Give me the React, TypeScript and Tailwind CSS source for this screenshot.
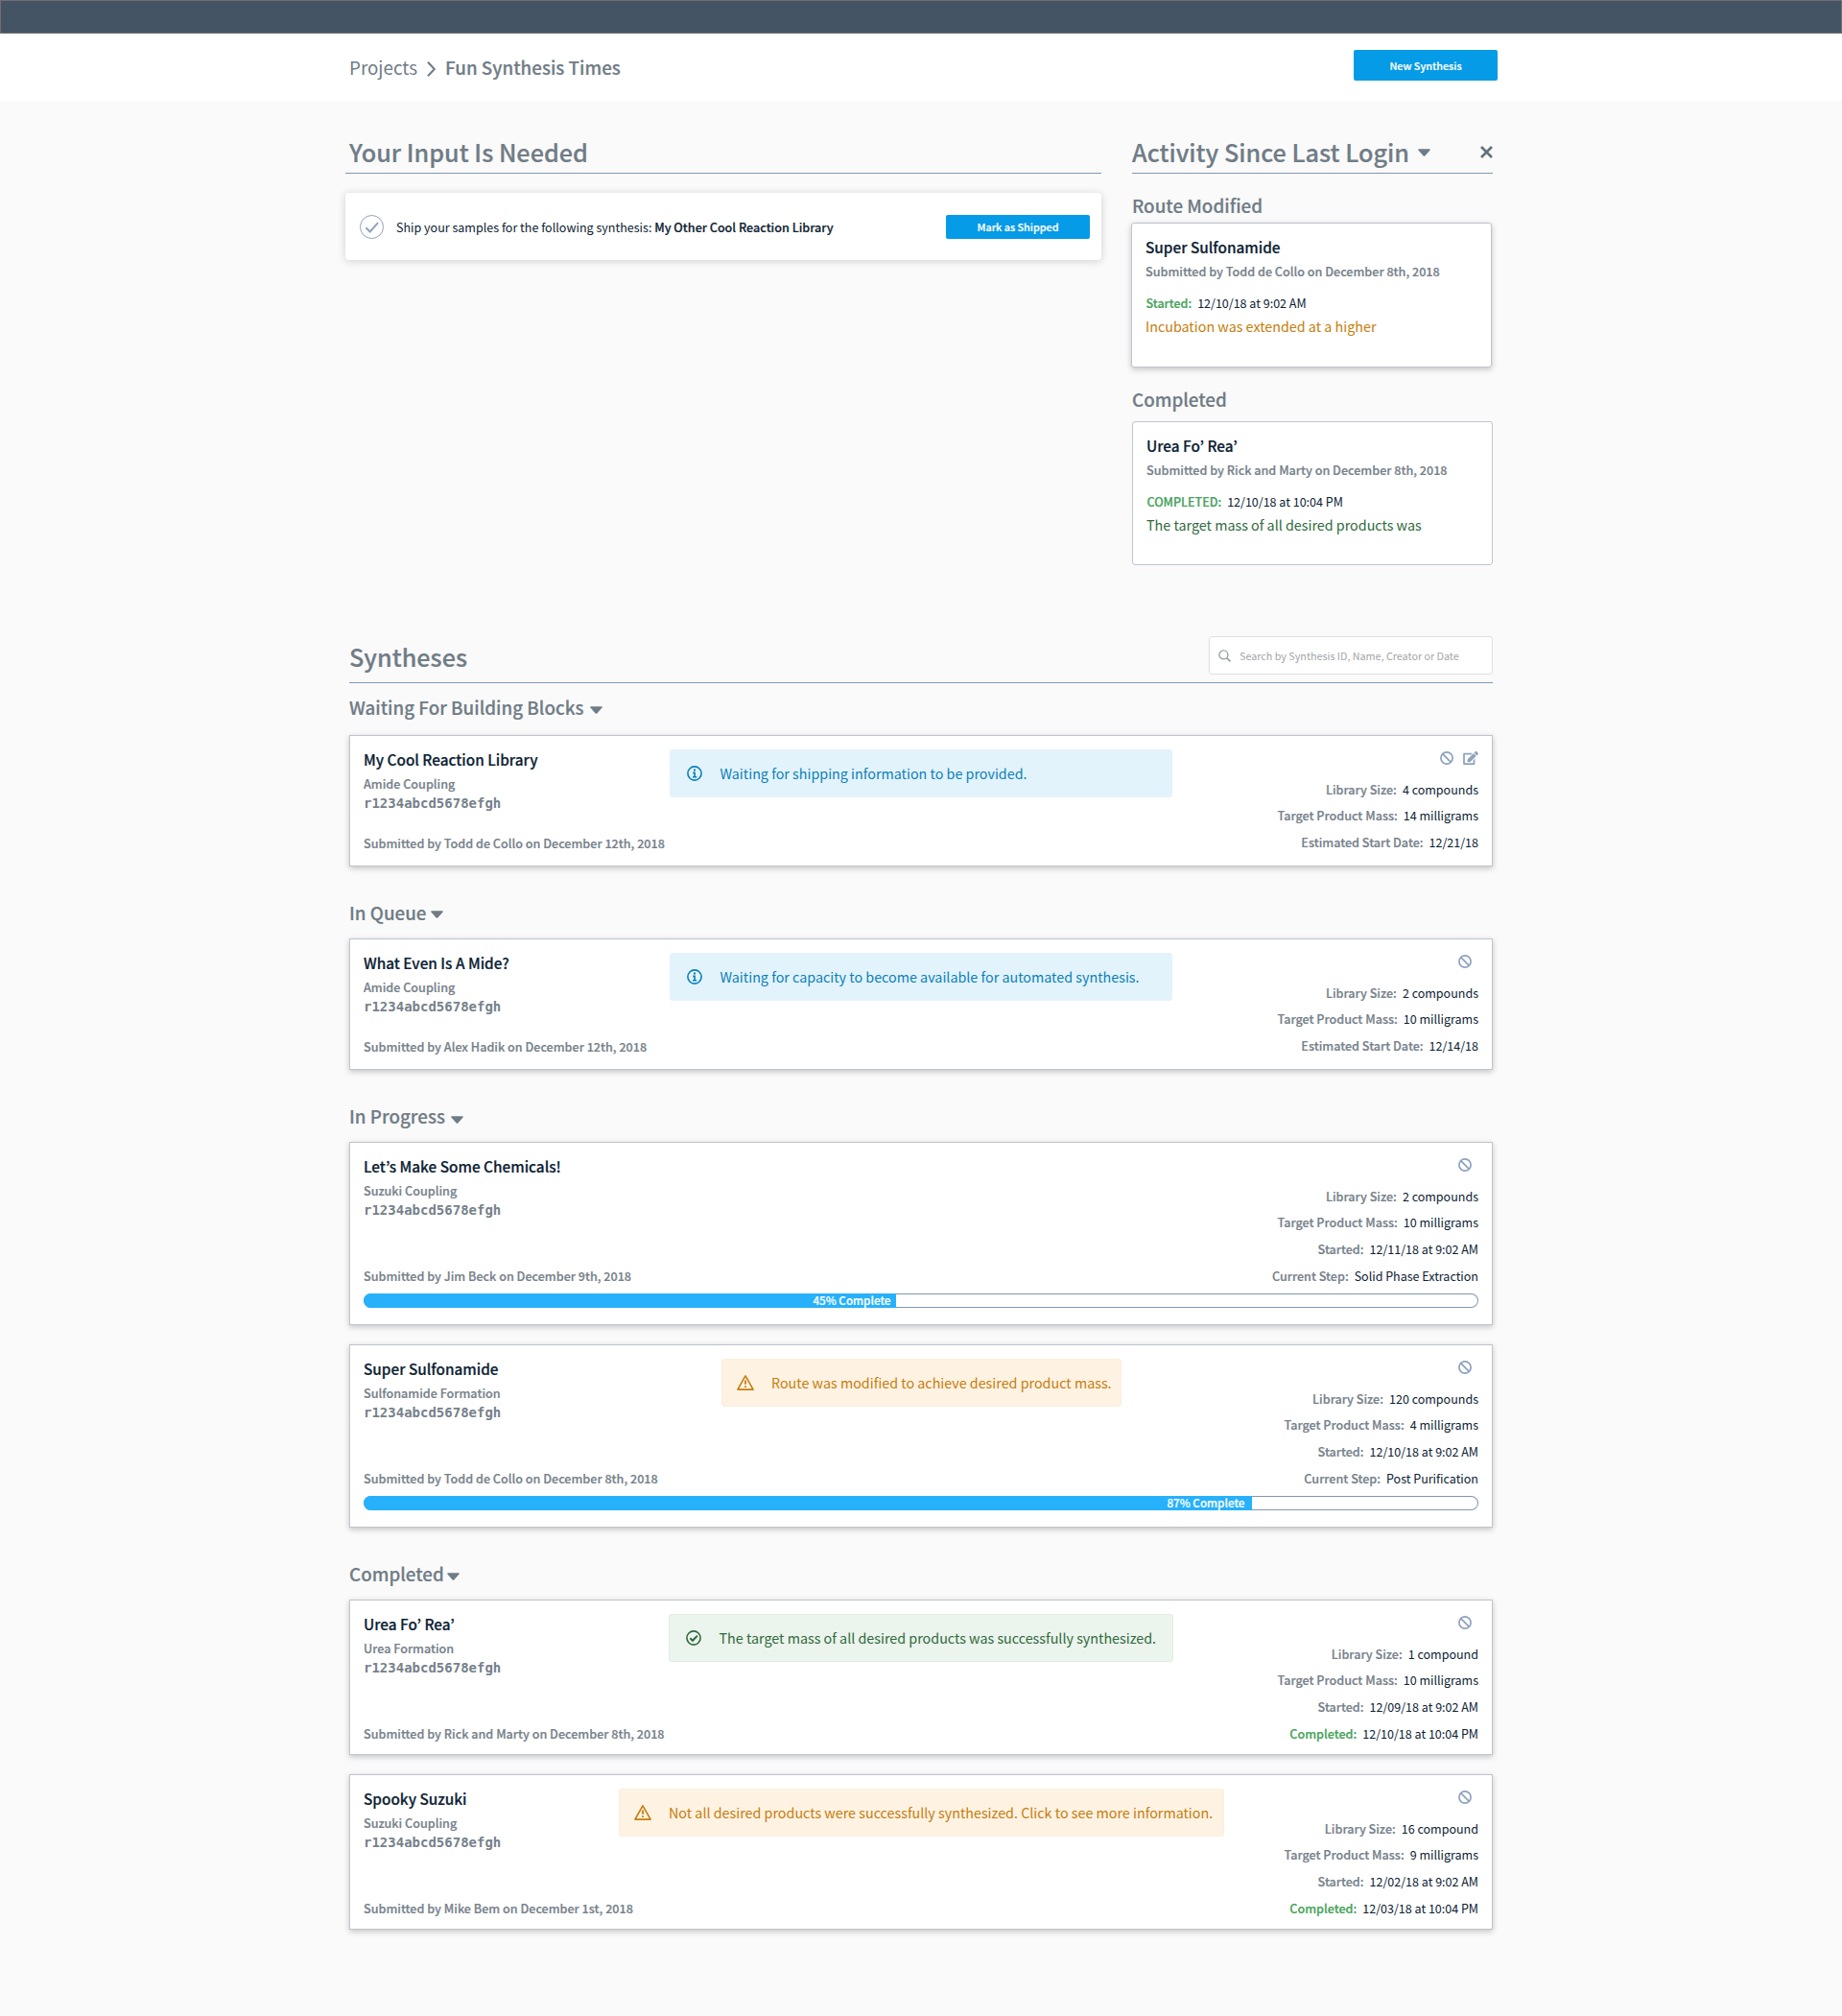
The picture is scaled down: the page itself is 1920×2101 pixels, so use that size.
import React from "react";
import { FaEdit } from "react-icons/fa";

type Tone = "info" | "warn" | "ok";

function Caret({ className = "" }: { className?: string }) {
  return (
    <svg viewBox="0 0 13 8" className={`h-2 w-[13px] shrink-0 ${className}`} fill="#707c86">
      <path d="M1 .2h11c.8 0 1.100.9.6 1.400L7.300 7.400c-.45.5-1.150.5-1.600 0L.4 1.600C-.1 1.100.2.2 1 .2Z" />
    </svg>
  );
}

function Ban() {
  return (
    <svg viewBox="0 0 14 14" className="size-3.5 shrink-0" fill="none" stroke="#8ea2bd" strokeWidth="1.7">
      <circle cx="7" cy="7" r="6.1" />
      <path d="m2.900 2.900 8.200 8.200" />
    </svg>
  );
}

function ToneIcon({ tone }: { tone: Tone }) {
  if (tone === "warn")
    return (
      <svg viewBox="0 0 18 16" className="h-4 w-[18px] shrink-0" fill="none" stroke="#c67d0a" strokeWidth="1.6" strokeLinejoin="round">
        <path d="M9 .9 17.100 15.100H.9Z" />
        <path d="M9 5.600v4.200M9 11.200v1.900" strokeWidth="1.8" />
      </svg>
    );
  if (tone === "ok")
    return (
      <svg viewBox="0 0 16 16" className="size-4 shrink-0" fill="none" stroke="#2f6a3c" strokeWidth="1.6">
        <circle cx="8" cy="8" r="7.1" />
        <path d="m4.300 8.200 2.700 2.600 4.900-5.200" strokeWidth="2" />
      </svg>
    );
  return (
    <svg viewBox="0 0 16 16" className="size-4 shrink-0" fill="none" stroke="#0c80b9" strokeWidth="1.6">
      <circle cx="8" cy="8" r="7.1" />
      <path d="M8 3.500v2" strokeWidth="2.100" />
      <path d="M6.200 7.400h1.900v4M6 11.700h4.200" strokeWidth="1.6" />
    </svg>
  );
}

const toneBox: Record<Tone, string> = {
  info: "bg-[#e2f3fc] border-[#e2f3fc] text-[#0c80b9] pl-[17px]",
  warn: "bg-[#fef2e3] border-[#fbeedd] text-[#c67d0a] pl-[15px]",
  ok: "bg-[#ebf4ed] border-[#e0ece3] text-[#2f6a3c] pl-[17px]",
};

function Banner({ tone, width, text }: { tone: Tone; width: string; text: string }) {
  return (
    <div className={`mt-px flex h-[50px] items-center gap-[18.5px] rounded-[3px] border ${width} ${toneBox[tone]}`}>
      <ToneIcon tone={tone} />
      <span className="text-[14.32px] leading-5 whitespace-nowrap">{text}</span>
    </div>
  );
}

type Row = { label: string; value: string; done?: boolean };

type Synthesis = {
  title: string;
  kind: string;
  submitted: string;
  banner?: { tone: Tone; width: string; text: string };
  rows: Row[];
  editable?: boolean;
  progress?: { fill: number; label: string; pad: string };
};

function SynthesisCard({ s }: { s: Synthesis }) {
  const tall = s.rows.length > 3;
  const height = s.progress ? "h-[191px]" : tall ? "h-[162px]" : "h-[137px]";
  return (
    <article
      className={`border border-[#bdc5ce] bg-white px-3.5 pt-[13px] shadow-[0_2px_6px_rgba(0,0,0,0.22)] ${height}`}
    >
      <div
        className={`grid grid-cols-[minmax(0,1fr)_auto_minmax(0,1fr)] items-start whitespace-nowrap ${
          tall ? "h-[136px]" : "h-[109px]"
        }`}
      >
        <div className="flex h-full flex-col text-[12.6px] leading-5 font-medium text-[#76818b] [-webkit-text-stroke:0.2px]">
          <h4 className="-mt-px mb-1 text-[15.35px] leading-6 text-[#0c2233]">{s.title}</h4>
          <p>{s.kind}</p>
          <p className="font-['DejaVu_Sans_Mono',monospace] text-sm leading-5 font-bold [-webkit-text-stroke:0px]">
            r1234abcd5678efgh
          </p>
          <p className="mt-auto">{s.submitted}</p>
        </div>
        {s.banner ? <Banner {...s.banner} /> : <div />}
        <div className="flex flex-col items-end text-[12.5px] leading-5">
          <div className={`mt-[3px] mb-4 flex h-3.5 items-center gap-2.5 ${s.editable ? "" : "pr-[7px]"}`}>
            <Ban />
            {s.editable && <FaEdit className="h-3.5 w-4 text-[#8ea2bd]" />}
          </div>
          {s.rows.map((r, i) => (
            <div key={r.label} className={`flex gap-1.5 ${i === 0 ? "" : i === 1 ? "mt-[7px]" : "mt-2"}`}>
              <span
                className={`text-[12.6px] font-medium [-webkit-text-stroke:0.2px] ${
                  r.done ? "text-[#45a25a]" : "text-[#76818b]"
                }`}
              >
                {r.label}
              </span>
              <span className="text-[#0c2233]">{r.value}</span>
            </div>
          ))}
        </div>
      </div>
      {s.progress && (
        <div className="mt-2 h-[15px] overflow-hidden rounded-full bg-white shadow-[inset_0_0_0_1px_#8197b3]">
          <div
            className={`flex h-[15px] items-center justify-end bg-[#27b1fb] pb-px text-[11.7px] leading-[14px] font-medium text-white [-webkit-text-stroke:0.2px] ${s.progress.pad}`}
            style={{ width: s.progress.fill }}
          >
            {s.progress.label}
          </div>
        </div>
      )}
    </article>
  );
}

function GroupHeading({ text, gap, caret, className }: { text: string; gap: string; caret: string; className: string }) {
  return (
    <h3 className={`flex text-[18.8px] leading-7 font-medium text-[#707c86] [-webkit-text-stroke:0.2px] ${gap} ${className}`}>
      <span>{text}</span>
      <Caret className={caret} />
    </h3>
  );
}

function ActivityCard({
  title, submitted, label, when, note, noteColor, className,
}: {
  title: string; submitted: string; label: string; when: string; note: string; noteColor: string; className: string;
}) {
  return (
    <article className={`rounded-[3px] border border-[#bdc5ce] bg-white px-3.5 pt-3 whitespace-nowrap ${className}`}>
      <h4 className="text-[15.35px] leading-6 font-medium text-[#0c2233] [-webkit-text-stroke:0.2px]">{title}</h4>
      <p className="mt-1 text-[12.6px] leading-5 font-medium text-[#76818b] [-webkit-text-stroke:0.2px]">{submitted}</p>
      <p className="mt-[13px] flex gap-1.5 pl-[0.5px] text-[12.5px] leading-5">
        <span className="font-medium text-[#45a25a] [-webkit-text-stroke:0.2px]">{label}</span>
        <span className="text-[#0c2233]">{when}</span>
      </p>
      <p className={`mt-1 text-[14.32px] leading-5 ${noteColor}`}>{note}</p>
    </article>
  );
}

const waiting: Synthesis = {
  title: "My Cool Reaction Library",
  kind: "Amide Coupling",
  submitted: "Submitted by Todd de Collo on December 12th, 2018",
  banner: { tone: "info", width: "w-[524px]", text: "Waiting for shipping information to be provided." },
  editable: true,
  rows: [
    { label: "Library Size:", value: "4 compounds" },
    { label: "Target Product Mass:", value: "14 milligrams" },
    { label: "Estimated Start Date:", value: "12/21/18" },
  ],
};

const queued: Synthesis = {
  title: "What Even Is A Mide?",
  kind: "Amide Coupling",
  submitted: "Submitted by Alex Hadik on December 12th, 2018",
  banner: { tone: "info", width: "w-[524px]", text: "Waiting for capacity to become available for automated synthesis." },
  rows: [
    { label: "Library Size:", value: "2 compounds" },
    { label: "Target Product Mass:", value: "10 milligrams" },
    { label: "Estimated Start Date:", value: "12/14/18" },
  ],
};

const running: Synthesis[] = [
  {
    title: "Let’s Make Some Chemicals!",
    kind: "Suzuki Coupling",
    submitted: "Submitted by Jim Beck on December 9th, 2018",
    rows: [
      { label: "Library Size:", value: "2 compounds" },
      { label: "Target Product Mass:", value: "10 milligrams" },
      { label: "Started:", value: "12/11/18 at 9:02 AM" },
      { label: "Current Step:", value: "Solid Phase Extraction" },
    ],
    progress: { fill: 555, label: "45% Complete", pad: "pr-[5.5px]" },
  },
  {
    title: "Super Sulfonamide",
    kind: "Sulfonamide Formation",
    submitted: "Submitted by Todd de Collo on December 8th, 2018",
    banner: { tone: "warn", width: "w-[417px]", text: "Route was modified to achieve desired product mass." },
    rows: [
      { label: "Library Size:", value: "120 compounds" },
      { label: "Target Product Mass:", value: "4 milligrams" },
      { label: "Started:", value: "12/10/18 at 9:02 AM" },
      { label: "Current Step:", value: "Post Purification" },
    ],
    progress: { fill: 926, label: "87% Complete", pad: "pr-[7.5px]" },
  },
];

const done: Synthesis[] = [
  {
    title: "Urea Fo’ Rea’",
    kind: "Urea Formation",
    submitted: "Submitted by Rick and Marty on December 8th, 2018",
    banner: { tone: "ok", width: "w-[526px]", text: "The target mass of all desired products was successfully synthesized." },
    rows: [
      { label: "Library Size:", value: "1 compound" },
      { label: "Target Product Mass:", value: "10 milligrams" },
      { label: "Started:", value: "12/09/18 at 9:02 AM" },
      { label: "Completed:", value: "12/10/18 at 10:04 PM", done: true },
    ],
  },
  {
    title: "Spooky Suzuki",
    kind: "Suzuki Coupling",
    submitted: "Submitted by Mike Bem on December 1st, 2018",
    banner: { tone: "warn", width: "w-[631px]", text: "Not all desired products were successfully synthesized. Click to see more information." },
    rows: [
      { label: "Library Size:", value: "16 compound" },
      { label: "Target Product Mass:", value: "9 milligrams" },
      { label: "Started:", value: "12/02/18 at 9:02 AM" },
      { label: "Completed:", value: "12/03/18 at 10:04 PM", done: true },
    ],
  },
];

export default function App() {
  return (
    <div className="min-h-[2101px] bg-[#fafafa] font-['Noto_Sans_CJK_KR','Noto_Sans',sans-serif] text-[#0c2233]">
      <div className="h-[35px] border border-[#6f6f6f] bg-[#455464]" />
      <header className="h-[70px] bg-white">
        <div className="mx-auto flex w-[1192px] items-start justify-between">
          <nav className="flex pt-[21px] text-[18.8px] leading-7 text-[#707c86]">
            <span>Projects</span>
            <svg viewBox="0 0 9 16" className="mt-2 mr-[10px] ml-[10px] h-4 w-[9px]" fill="none" stroke="#707c86" strokeWidth="2">
              <path d="m1 .8 6.800 7.200L1 15.200" />
            </svg>
            <span className="font-medium [-webkit-text-stroke:0.2px]">Fun Synthesis Times</span>
          </nav>
          <button className="mt-[17px] -mr-[5px] h-8 w-[150px] rounded-[2px] bg-[#069be6] text-[10.8px] leading-8 font-medium text-white [-webkit-text-stroke:0.2px]">
            New Synthesis
          </button>
        </div>
      </header>

      <main className="mx-auto w-[1192px] pt-[35px]">
        <div className="-ml-1 flex items-start gap-8">
          <section className="w-[788px]">
            <h2 className="h-[41px] border-b border-[#8197b3] pl-1 text-[25.2px] leading-9 font-medium text-[#707c86] [-webkit-text-stroke:0.2px]">
              Your Input Is Needed
            </h2>
            <div className="mt-5 flex h-[70px] items-center rounded-[4px] bg-white pr-3 pl-[15px] shadow-[0_1px_9px_rgba(0,0,0,0.18)]">
              <svg viewBox="0 0 25 25" className="size-[25px]" fill="none" stroke="#8ea2bd">
                <circle cx="12.5" cy="12.5" r="12" />
                <path d="m6.500 13.200 4.200 4.300 8.300-9.300" strokeWidth="2" />
              </svg>
              <p className="mt-px ml-[13px] text-[12.54px] leading-5">
                Ship your samples for the following synthesis:{" "}
                <b className="text-[12.6px] font-medium [-webkit-text-stroke:0.2px]">My Other Cool Reaction Library</b>
              </p>
              <button className="ml-auto h-[25px] w-[150px] rounded-[2px] bg-[#069be6] text-[10.8px] leading-[25px] font-medium text-white [-webkit-text-stroke:0.2px]">
                Mark as Shipped
              </button>
            </div>
          </section>

          <section className="w-[376px]">
            <h2 className="flex h-[41px] border-b border-[#8197b3] text-[25.2px] leading-9 font-medium text-[#707c86] [-webkit-text-stroke:0.2px]">
              <span>Activity Since Last Login</span>
              <Caret className="mt-[15px] ml-[9px]" />
              <svg viewBox="0 0 13 13" className="mt-3 ml-auto size-[13px]" fill="none" stroke="#65717c" strokeWidth="2.7">
                <path d="m1 1 11 11M12 1 1 12" />
              </svg>
            </h2>
            <h3 className="mt-[19px] text-[18.8px] leading-7 font-medium text-[#707c86] [-webkit-text-stroke:0.2px]">Route Modified</h3>
            <ActivityCard
              className="mt-1 -ml-px h-[151px] w-[376px] shadow-[0_2px_6px_rgba(0,0,0,0.22)]"
              title="Super Sulfonamide"
              submitted="Submitted by Todd de Collo on December 8th, 2018"
              label="Started:"
              when="12/10/18 at 9:02 AM"
              note="Incubation was extended at a higher"
              noteColor="text-[#c67d0a]"
            />
            <h3 className="mt-[19px] text-[18.8px] leading-7 font-medium text-[#707c86] [-webkit-text-stroke:0.2px]">Completed</h3>
            <ActivityCard
              className="mt-[9px] h-[150px]"
              title="Urea Fo’ Rea’"
              submitted="Submitted by Rick and Marty on December 8th, 2018"
              label="COMPLETED:"
              when="12/10/18 at 10:04 PM"
              note="The target mass of all desired products was"
              noteColor="text-[#2f6a3c]"
            />
          </section>
        </div>

        <section className="mt-[74px]">
          <div className="flex h-[49px] items-start justify-between border-b border-[#8197b3]">
            <h2 className="mt-[3px] text-[25.2px] leading-9 font-medium text-[#707c86] [-webkit-text-stroke:0.2px]">Syntheses</h2>
            <div className="flex h-10 w-[296px] items-center rounded-[3px] border border-[#e0e0e0] bg-white pl-[9px] text-[#a3a6a9]">
              <svg viewBox="0 0 13 13" className="size-[13px]" fill="none" stroke="#9b9fa3" strokeWidth="1.4">
                <circle cx="5.400" cy="5.400" r="4.500" />
                <path d="m8.700 8.700 3.700 3.700" strokeWidth="1.7" />
              </svg>
              <span className="mt-px ml-[9px] text-[10.76px] leading-5">Search by Synthesis ID, Name, Creator or Date</span>
            </div>
          </div>

          <GroupHeading text="Waiting For Building Blocks" gap="gap-1.5" caret="mt-[13px]" className="mt-[11px] mb-[15px]" />
          <SynthesisCard s={waiting} />

          <GroupHeading text="In Queue" gap="gap-[5px]" caret="mt-3" className="mt-[34px] mb-[13px]" />
          <SynthesisCard s={queued} />

          <GroupHeading text="In Progress" gap="gap-1.5" caret="mt-3.5" className="mt-[34px] mb-[13px]" />
          <div className="flex flex-col gap-5">
            {running.map((s) => <SynthesisCard key={s.title} s={s} />)}
          </div>

          <GroupHeading text="Completed" gap="gap-[3px]" caret="mt-[12.5px]" className="mt-[34px] mb-[13px]" />
          <div className="flex flex-col gap-5">
            {done.map((s) => <SynthesisCard key={s.title} s={s} />)}
          </div>
        </section>
      </main>
    </div>
  );
}
